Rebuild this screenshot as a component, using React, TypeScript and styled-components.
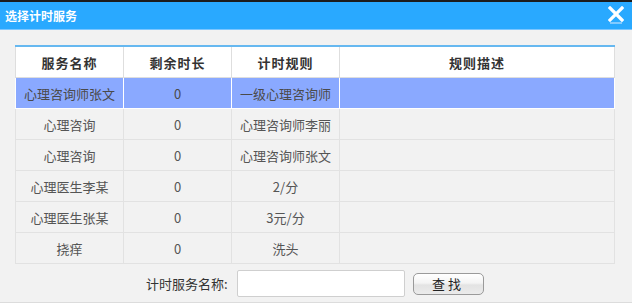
import React from "react";
import styled, { createGlobalStyle } from "styled-components";

const GlobalStyle = createGlobalStyle`
  html, body { margin: 0; padding: 0; }
  body {
    background: #f2f2f2;
    font-family: "Noto Sans CJK SC", "DejaVu Sans", sans-serif;
  }
`;

const Dialog = styled.div`
  width: 632px;
  height: 303px;
  display: flex;
  flex-direction: column;
  background: #f2f2f2;
  border-top: 2px solid #1c1c1c;
  box-sizing: border-box;
  border-bottom: 1px solid #dcdcdc;
`;

const TitleBar = styled.div`
  height: 28px;
  box-sizing: border-box;
  background: #29a9ff;
  border-bottom: 1px solid #7cc6ff;
  display: flex;
  align-items: center;
  justify-content: space-between;
  padding: 0 8px 0 5px;
`;

const Title = styled.span`
  color: #fff;
  font-size: 12px;
  font-weight: bold;
  line-height: 12px;
`;

const Close = styled.svg`
  width: 16px;
  height: 20px;
  display: block;
`;

const Body = styled.div`
  flex: 1;
  padding: 15px 17px 0 15px;
  display: flex;
  flex-direction: column;
`;

const Table = styled.table`
  width: 600px;
  border-collapse: collapse;
  table-layout: fixed;
  border-top: 2px solid #66b8f0;
`;

const Col = styled.col<{ $w?: number }>`
  width: ${(p) => (p.$w ? `${p.$w}px` : "auto")};
`;

const Th = styled.th`
  height: 30px;
  padding: 0;
  background: #fff;
  border: 1px solid #dedede;
  border-top: none;
  color: #333;
  font-size: 13px;
  font-weight: bold;
  letter-spacing: 1px;
  text-align: center;
`;

const Tr = styled.tr<{ $active?: boolean }>`
  background: ${(p) => (p.$active ? "#8aa9ff" : "#f2f2f2")};
  & > td {
    border-color: ${(p) => (p.$active ? "#ffffff" : "#e2e2e2")};
    color: ${(p) => (p.$active ? "#4a4a4a" : "#555")};
  }
`;

const Td = styled.td`
  height: 30px;
  padding: 0;
  border: 1px solid #e2e2e2;
  font-size: 13px;
  text-align: center;
  white-space: nowrap;
  overflow: hidden;
`;

const SearchRow = styled.div`
  display: flex;
  align-items: center;
  margin-top: 6px;
  padding-left: 131px;
`;

const Label = styled.span`
  font-size: 13px;
  color: #333;
  margin-right: 9px;
`;

const Input = styled.input`
  box-sizing: border-box;
  width: 168px;
  height: 27px;
  border: 1px solid #cfcfcf;
  border-radius: 2px;
  background: #fff;
  outline: none;
`;

const Button = styled.button`
  box-sizing: border-box;
  width: 71px;
  height: 22px;
  margin-left: 8px;
  border: 1px solid #9a9a9a;
  border-radius: 5px;
  background: linear-gradient(#ffffff 0%, #f4f4f4 45%, #e3e3e3 55%, #ebebeb 100%);
  font-family: "Noto Sans CJK SC", sans-serif;
  font-size: 13px;
  color: #222;
  letter-spacing: 3px;
  padding: 0;
  line-height: 20px;
`;

const rows = [
  ["心理咨询师张文", "0", "一级心理咨询师", ""],
  ["心理咨询", "0", "心理咨询师李丽", ""],
  ["心理咨询", "0", "心理咨询师张文", ""],
  ["心理医生李某", "0", "2/分", ""],
  ["心理医生张某", "0", "3元/分", ""],
  ["挠痒", "0", "洗头", ""],
];

export default function App() {
  return (
    <>
      <GlobalStyle />
      <Dialog>
        <TitleBar>
          <Title>选择计时服务</Title>
          <Close viewBox="0 0 16 20">
            <path d="M2 2 L14 14 M14 2 L2 14" stroke="#ffffff" strokeWidth="3.2" strokeLinecap="square" />
            <path d="M2 17 L14 17" stroke="#9fd6ff" strokeWidth="1.5" />
          </Close>
        </TitleBar>
        <Body>
          <Table>
            <colgroup>
              <Col $w={108} />
              <Col $w={108} />
              <Col $w={108} />
              <Col />
            </colgroup>
            <thead>
              <tr>
                <Th>服务名称</Th>
                <Th>剩余时长</Th>
                <Th>计时规则</Th>
                <Th>规则描述</Th>
              </tr>
            </thead>
            <tbody>
              {rows.map((r, i) => (
                <Tr key={i} $active={i === 0}>
                  {r.map((c, j) => (
                    <Td key={j}>{c}</Td>
                  ))}
                </Tr>
              ))}
            </tbody>
          </Table>
          <SearchRow>
            <Label>计时服务名称:</Label>
            <Input />
            <Button>查找</Button>
          </SearchRow>
        </Body>
      </Dialog>
    </>
  );
}
